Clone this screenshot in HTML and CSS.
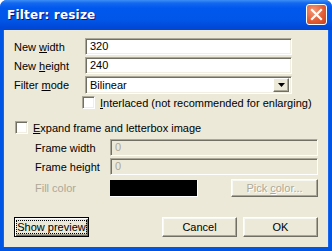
FILE: index.html
```html
<!DOCTYPE html>
<html lang="en">
<head>
    <meta charset="UTF-8">
    <title>Filter: resize</title>
    <link rel="stylesheet" href="styles.css">
</head>
<body>

    <div class="window">
        <div class="titlebar">
            <span class="title">Filter: resize</span>
            <span class="close-btn">
                <svg width="13" height="13" viewBox="0 0 13 13">
                    <path d="M2 2 L11 11 M11 2 L2 11" stroke="#fff" stroke-width="2.2" stroke-linecap="square"/>
                </svg>
            </span>
        </div>

        <div class="dialog">
            <!-- size fields -->
            <div class="field-row">
                <label class="field-label">New <u>w</u>idth</label>
                <div class="textbox">320</div>
            </div>
            <div class="field-row">
                <label class="field-label">New <u>h</u>eight</label>
                <div class="textbox">240</div>
            </div>
            <div class="field-row select-row">
                <label class="field-label">Filter <u>m</u>ode</label>
                <div class="textbox combo">
                    <span>Bilinear</span>
                    <span class="combo-arrow">
                        <svg width="7" height="4" viewBox="0 0 7 4"><path d="M0 0 H7 L3.5 4 Z" fill="#000"/></svg>
                    </span>
                </div>
            </div>
            <div class="check-row interlaced">
                <span class="checkbox"></span>
                <span><u>I</u>nterlaced (not recommended for enlarging)</span>
            </div>

            <!-- letterbox -->
            <div class="check-row expand">
                <span class="checkbox"></span>
                <span><u>E</u>xpand frame and letterbox image</span>
            </div>
            <div class="sub-row first">
                <label class="sub-label">Frame width</label>
                <div class="textbox disabled">0</div>
            </div>
            <div class="sub-row">
                <label class="sub-label">Frame height</label>
                <div class="textbox disabled">0</div>
            </div>
            <div class="sub-row color-row">
                <label class="sub-label grey">Fill color</label>
                <div class="swatch"></div>
                <div class="btn pick-btn"><span>Pick <u>c</u>olor...</span></div>
            </div>

            <!-- buttons -->
            <div class="button-row">
                <div class="btn default-btn"><span class="focus">Show preview</span></div>
                <div class="right-buttons">
                    <div class="btn">Cancel</div>
                    <div class="btn">OK</div>
                </div>
            </div>
        </div>
    </div>

</body>
</html>
```

FILE: styles.css
```css
body {
    margin: 0;
    padding: 0;
    background-color: #fff;
    font-family: "Liberation Sans", Arial, sans-serif;
    font-size: 11px;
    color: #000;
}

u {
    text-decoration: underline;
    text-underline-offset: 1px;
}

.window {
    width: 332px;
    height: 251px;
    box-sizing: border-box;
    display: flex;
    flex-direction: column;
    border-radius: 7px 7px 0 0;
    overflow: hidden;
    background-color: #0055e5;
}

.titlebar {
    height: 30px;
    flex: none;
    display: flex;
    align-items: center;
    justify-content: space-between;
    padding: 0 5px 1px 7px;
    box-sizing: border-box;
    background: linear-gradient(to bottom, #3d8ff5 0, #1468f0 3px, #0058ee 8px, #0056e8 20px, #0049d9 27px, #0047d2 30px);
}

.title {
    color: #fff;
    font-family: "DejaVu Sans", Verdana, sans-serif;
    font-weight: bold;
    font-size: 12px;
    letter-spacing: 0.2px;
    text-shadow: 1px 1px #0a1883;
}

.close-btn {
    width: 19px;
    height: 19px;
    border: 1px solid #fff;
    border-radius: 3px;
    display: flex;
    align-items: center;
    justify-content: center;
    background: radial-gradient(circle at 35% 30%, #f39a78 0, #e35d34 55%, #c8401c 100%);
}

.dialog {
    flex: 1;
    margin: 0 3px 4px 3px;
    background-color: #ece9d8;
    padding: 8px 11px 0 11px;
    box-shadow: inset 1px 0 #1665ee, inset -1px 0 #1665ee;
}

.textbox {
    box-sizing: border-box;
    height: 17px;
    background-color: #fff;
    border: 1px solid;
    border-color: #aca899 #fff #fff #aca899;
    box-shadow: inset 1px 1px #716f64, inset -1px -1px #f1efe2;
    padding: 0 4px;
    line-height: 15px;
}

.field-row {
    display: flex;
    align-items: center;
    margin-bottom: 2px;
}

.field-label {
    width: 71px;
    flex: none;
}

.field-row .textbox {
    width: 207px;
}

.select-row .textbox {
    height: 18px;
    display: flex;
    align-items: center;
    justify-content: space-between;
    padding: 0 2px 0 4px;
}

.combo-arrow {
    width: 16px;
    height: 14px;
    box-sizing: border-box;
    display: flex;
    align-items: center;
    justify-content: center;
    background-color: #ece9d8;
    border: 1px solid;
    border-color: #fff #716f64 #716f64 #fff;
    box-shadow: inset -1px -1px #aca899;
}

.check-row {
    display: flex;
    align-items: center;
    gap: 5px;
    height: 13px;
}

.interlaced {
    padding-left: 68px;
}

.expand {
    margin-top: 12px;
    padding-left: 1px;
}

.checkbox {
    width: 13px;
    height: 13px;
    box-sizing: border-box;
    background-color: #fff;
    border: 1px solid;
    border-color: #aca899 #fff #fff #aca899;
    box-shadow: inset 1px 1px #716f64, inset -1px -1px #f1efe2;
}

.sub-row {
    display: flex;
    align-items: center;
    padding-left: 21px;
    margin-top: 2px;
}

.sub-row.first {
    margin-top: 5px;
}

.sub-label {
    width: 75px;
    flex: none;
}

.grey {
    color: #aca899;
}

.sub-row .textbox {
    width: 208px;
}

.textbox.disabled {
    background-color: #ece9d8;
    color: #aca899;
    box-shadow: inset 1px 1px #716f64;
}

.color-row {
    margin-top: 4px;
}

.swatch {
    width: 88px;
    height: 17px;
    background-color: #000;
    box-sizing: border-box;
    border-right: 1px solid #fff;
    border-bottom: 1px solid #fff;
}

.btn {
    box-sizing: border-box;
    width: 75px;
    height: 20px;
    display: flex;
    align-items: center;
    justify-content: center;
    white-space: nowrap;
    background-color: #ece9d8;
    border: 1px solid;
    border-color: #fff #716f64 #716f64 #fff;
    box-shadow: inset -1px -1px #aca899, inset 1px 1px #f8f8f4;
}

.pick-btn {
    width: 87px;
    height: 18px;
    margin-left: 33px;
    color: #aca899;
    text-shadow: 1px 1px #fff;
}

.button-row {
    display: flex;
    justify-content: space-between;
    margin-top: 20px;
}

.right-buttons {
    display: flex;
    gap: 6px;
}

.default-btn {
    border: 1px solid #000;
    padding: 2px 1px;
    box-shadow: inset 1px 1px #fff, inset -1px -1px #716f64, inset -2px -2px #aca899;
}

.focus {
    flex: 1;
    align-self: stretch;
    display: flex;
    align-items: center;
    justify-content: center;
    border: 1px dotted #000;
}
```
